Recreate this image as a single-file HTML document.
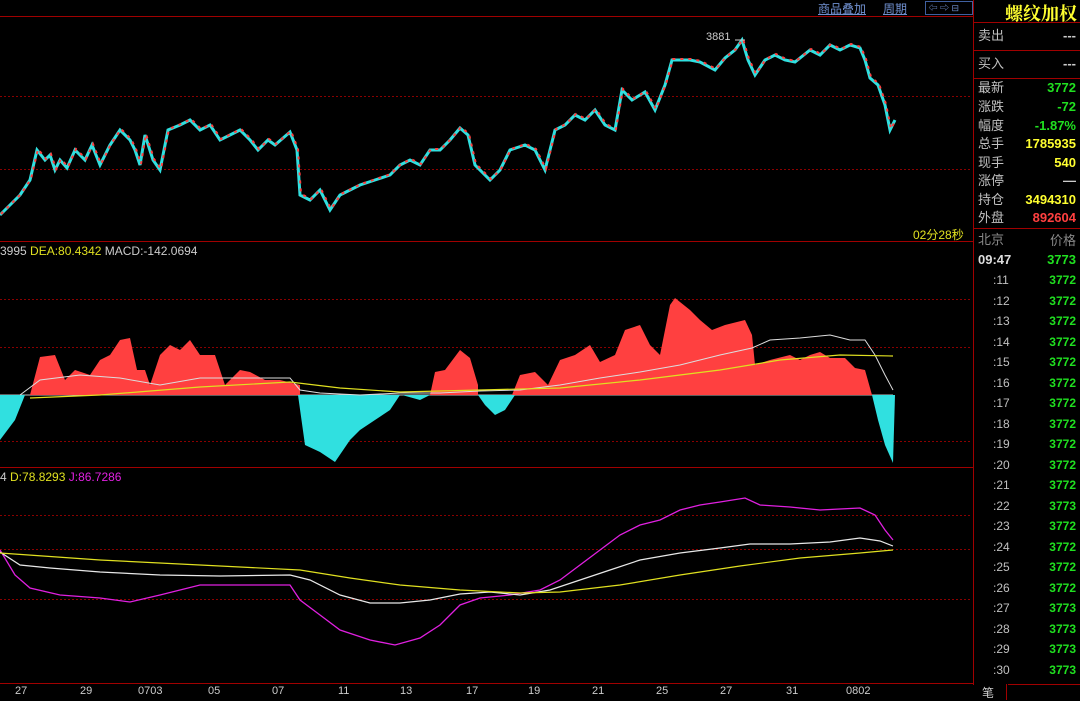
<!DOCTYPE html>
<html><head><meta charset="utf-8"><style>
html,body{margin:0;padding:0;background:#000;width:1080px;height:700px;overflow:hidden;font-family:"Liberation Sans","Noto Sans CJK SC",sans-serif}
.t{position:absolute;white-space:nowrap}
.rp{position:absolute;left:973px;top:0;width:107px;height:700px}
.row{position:absolute;left:5px;width:98px;font-size:13px;color:#c0c0c0;line-height:18px;height:18px}
.row span{position:absolute;right:0;top:0;font-weight:bold;font-family:"Liberation Sans",sans-serif}
.tr{position:absolute;left:20px;width:83px;font-size:12px;color:#c0c0c0;line-height:18px;height:18px}
.tr span{position:absolute;right:0;top:0;color:#20e020;font-weight:bold}
</style></head><body>
<svg width="1080" height="700" style="position:absolute;left:0;top:0">
<g stroke="#8a0000" stroke-width="1" stroke-dasharray="2 2">
<line x1="0" y1="96.5" x2="972" y2="96.5"/><line x1="0" y1="169.5" x2="972" y2="169.5"/>
<line x1="0" y1="299.5" x2="972" y2="299.5"/><line x1="0" y1="347.5" x2="972" y2="347.5"/><line x1="0" y1="441.5" x2="972" y2="441.5"/>
<line x1="0" y1="515.5" x2="972" y2="515.5"/><line x1="0" y1="549.5" x2="972" y2="549.5"/><line x1="0" y1="599.5" x2="972" y2="599.5"/>
</g>
<g stroke="#a00000" stroke-width="1">
<line x1="0" y1="16.5" x2="973" y2="16.5"/><line x1="0" y1="241.5" x2="973" y2="241.5"/>
<line x1="0" y1="467.5" x2="973" y2="467.5"/><line x1="0" y1="683.5" x2="973" y2="683.5"/>
<line x1="973.5" y1="0" x2="973.5" y2="685"/>
<line x1="973" y1="22.5" x2="1080" y2="22.5"/><line x1="973" y1="50.5" x2="1080" y2="50.5"/><line x1="973" y1="78.5" x2="1080" y2="78.5"/><line x1="973" y1="228.5" x2="1080" y2="228.5"/>
<line x1="1008" y1="684.5" x2="1080" y2="684.5"/>
</g>
<line x1="0" y1="395" x2="893" y2="395" stroke="#bbb" stroke-width="1"/>
<polyline fill="none" stroke="#30e0e0" stroke-width="3" points="0,215 10,205 20,195 30,180 37,150 45,160 50,155 55,170 60,160 67,168 75,150 85,160 92,145 100,165 110,145 120,130 130,140 135,150 140,165 145,135 153,160 160,170 168,130 180,125 190,120 200,130 210,125 220,140 230,135 240,130 250,140 258,150 268,140 275,145 290,132 297,150 300,195 310,200 320,190 330,210 340,195 350,190 360,185 375,180 390,175 400,165 410,160 420,165 430,150 440,150 450,140 460,128 468,135 475,165 490,180 500,170 510,150 525,145 535,150 545,170 555,130 565,125 575,115 585,120 595,110 605,125 615,130 622,90 632,100 645,92 655,110 665,85 672,60 690,60 700,62 715,70 725,58 735,50 742,40 748,60 755,75 765,60 775,55 785,60 795,62 810,50 820,55 830,45 840,50 850,45 860,48 865,60 870,78 878,85 885,105 890,130 895,120"/>
<polyline fill="none" stroke="#ff4040" stroke-width="2" stroke-dasharray="3 5" transform="translate(1,-1)" points="0,215 10,205 20,195 30,180 37,150 45,160 50,155 55,170 60,160 67,168 75,150 85,160 92,145 100,165 110,145 120,130 130,140 135,150 140,165 145,135 153,160 160,170 168,130 180,125 190,120 200,130 210,125 220,140 230,135 240,130 250,140 258,150 268,140 275,145 290,132 297,150 300,195 310,200 320,190 330,210 340,195 350,190 360,185 375,180 390,175 400,165 410,160 420,165 430,150 440,150 450,140 460,128 468,135 475,165 490,180 500,170 510,150 525,145 535,150 545,170 555,130 565,125 575,115 585,120 595,110 605,125 615,130 622,90 632,100 645,92 655,110 665,85 672,60 690,60 700,62 715,70 725,58 735,50 742,40 748,60 755,75 765,60 775,55 785,60 795,62 810,50 820,55 830,45 840,50 850,45 860,48 865,60 870,78 878,85 885,105 890,130 895,120"/>
<line x1="735" y1="40" x2="745" y2="40" stroke="#ccc"/>
<polygon fill="#ff4040" points="30,395 40,357 55,355 65,380 75,370 90,375 100,360 110,355 120,340 130,338 137,370 145,370 150,385 160,355 170,345 180,350 190,340 200,355 215,355 225,385 240,370 250,372 265,380 280,380 300,385 300,395"/>
<polygon fill="#ff4040" points="430,395 435,372 445,370 460,350 470,358 478,385 478,395"/>
<polygon fill="#ff4040" points="512,395 520,375 535,372 548,385 560,360 575,355 590,345 600,362 615,355 625,330 640,325 650,345 660,355 670,305 675,298 690,310 700,320 712,330 725,325 745,320 752,335 755,365 770,360 790,355 800,360 810,355 820,352 830,358 845,358 855,368 865,370 872,395"/>
<polygon fill="#30e0e0" points="0,395 25,395 15,420 0,440"/>
<polygon fill="#30e0e0" points="298,395 400,395 390,410 375,420 360,430 350,440 335,462 320,452 305,445"/>
<polygon fill="#30e0e0" points="478,395 515,395 505,410 495,415 485,405"/>
<polygon fill="#30e0e0" points="402,395 430,395 420,400"/>
<polygon fill="#30e0e0" points="872,395 895,395 893,463 885,445 878,420"/>
<polyline fill="none" stroke="#ddd" stroke-width="1" points="20,395 40,380 80,375 120,378 160,385 200,378 240,378 260,378 290,378 300,390 320,393 360,395 400,393 440,393 480,391 520,390 560,385 600,378 640,372 680,365 720,355 752,348 770,340 800,338 830,335 850,340 865,340 875,355 885,375 893,390"/>
<polyline fill="none" stroke="#e0e020" stroke-width="1.2" points="30,398 100,395 200,387 290,382 340,388 400,392 480,390 560,388 640,380 720,370 780,360 840,355 893,356"/>
<polyline fill="none" stroke="#e020e0" stroke-width="1.3" points="0,550 15,575 30,588 60,595 100,598 130,602 160,595 200,585 250,585 290,585 300,600 320,615 340,630 370,640 395,645 420,638 440,625 460,605 480,598 510,595 540,590 560,580 580,565 600,550 620,535 640,525 660,520 680,510 700,505 720,502 745,498 760,505 790,507 820,510 860,508 875,515 885,530 893,540"/>
<polyline fill="none" stroke="#e8e8e8" stroke-width="1.2" points="0,552 20,565 50,568 100,572 160,575 220,576 290,575 310,580 340,595 370,603 400,603 430,600 460,594 490,592 520,595 550,590 580,580 610,570 640,560 680,553 720,548 750,544 790,544 830,542 860,538 880,541 893,546"/>
<polyline fill="none" stroke="#e0e020" stroke-width="1.2" points="0,553 100,560 200,565 300,570 350,578 400,585 460,590 520,593 560,592 620,585 680,575 740,566 800,558 860,553 893,550"/>
</svg>
<div class="t" style="left:818px;top:0;font-size:12px;color:#7090d0;text-decoration:underline">商品叠加</div>
<div class="t" style="left:883px;top:0;font-size:12px;color:#7090d0;text-decoration:underline">周期</div>
<div class="t" style="left:925px;top:1px;width:46px;height:12px;border:1px solid #4060a0;font-size:9px;color:#7090d0;line-height:12px">&nbsp;⇦ ⇨ ⊟</div>
<div class="t" style="left:706px;top:31px;font-size:11px;color:#ccc">3881</div>
<div class="t" style="left:913px;top:226px;font-size:12px;color:#e0e020">02分28秒</div>
<div class="t" style="left:0;top:244px;font-size:12px;color:#ccc">3995 <span style="color:#e0e020">DEA:80.4342</span> MACD:-142.0694</div>
<div class="t" style="left:0;top:470px;font-size:12px;color:#ccc">4 <span style="color:#e0e020">D:78.8293</span> <span style="color:#e020e0">J:86.7286</span></div>
<div class="t" style="left:0;top:685px;width:972px;height:15px;font-size:11px;color:#ccc">
<span class="t" style="left:15px">27</span><span class="t" style="left:80px">29</span><span class="t" style="left:138px">0703</span><span class="t" style="left:208px">05</span><span class="t" style="left:272px">07</span><span class="t" style="left:338px">11</span><span class="t" style="left:400px">13</span><span class="t" style="left:466px">17</span><span class="t" style="left:528px">19</span><span class="t" style="left:592px">21</span><span class="t" style="left:656px">25</span><span class="t" style="left:720px">27</span><span class="t" style="left:786px">31</span><span class="t" style="left:846px">0802</span></div>
<div class="t" style="left:982px;top:684px;font-size:12px;color:#ccc;width:24px;height:16px;border-right:1px solid #a00000">笔</div>
<div class="rp">
<div class="t" style="left:32px;top:0;font-size:18px;font-weight:bold;color:#ffff30;font-family:'Noto Serif CJK SC',serif">螺纹加权</div>
<div class="row" style="top:27px">卖出<span style="color:#ccc">---</span></div>
<div class="row" style="top:55px">买入<span style="color:#ccc">---</span></div>
<div class="row" style="top:79px">最新<span style="color:#20e020">3772</span></div>
<div class="row" style="top:98px">涨跌<span style="color:#20e020">-72</span></div>
<div class="row" style="top:117px">幅度<span style="color:#20e020">-1.87%</span></div>
<div class="row" style="top:135px">总手<span style="color:#ffff30">1785935</span></div>
<div class="row" style="top:154px">现手<span style="color:#ffff30">540</span></div>
<div class="row" style="top:172px">涨停<span style="color:#ccc">—</span></div>
<div class="row" style="top:191px">持仓<span style="color:#ffff30">3494310</span></div>
<div class="row" style="top:209px">外盘<span style="color:#ff4040">892604</span></div>
<div class="row" style="top:231px;color:#888">北京<span style="color:#888;font-weight:normal;font-family:'Noto Sans CJK SC',sans-serif">价格</span></div>
<div class="row" style="top:251px;color:#ddd;font-weight:bold">09:47<span style="color:#20e020">3773</span></div>
<div class="tr" style="top:271px">:11<span>3772</span></div>
<div class="tr" style="top:292px">:12<span>3772</span></div>
<div class="tr" style="top:312px">:13<span>3772</span></div>
<div class="tr" style="top:333px">:14<span>3772</span></div>
<div class="tr" style="top:353px">:15<span>3772</span></div>
<div class="tr" style="top:374px">:16<span>3772</span></div>
<div class="tr" style="top:394px">:17<span>3772</span></div>
<div class="tr" style="top:415px">:18<span>3772</span></div>
<div class="tr" style="top:435px">:19<span>3772</span></div>
<div class="tr" style="top:456px">:20<span>3772</span></div>
<div class="tr" style="top:476px">:21<span>3772</span></div>
<div class="tr" style="top:497px">:22<span>3773</span></div>
<div class="tr" style="top:517px">:23<span>3772</span></div>
<div class="tr" style="top:538px">:24<span>3772</span></div>
<div class="tr" style="top:558px">:25<span>3772</span></div>
<div class="tr" style="top:579px">:26<span>3772</span></div>
<div class="tr" style="top:599px">:27<span>3773</span></div>
<div class="tr" style="top:620px">:28<span>3773</span></div>
<div class="tr" style="top:640px">:29<span>3773</span></div>
<div class="tr" style="top:661px">:30<span>3773</span></div>
</div>
</body></html>
